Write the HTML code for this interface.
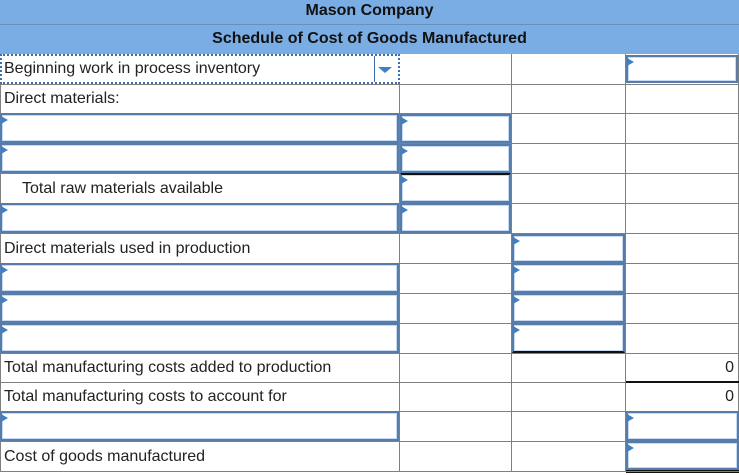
<!DOCTYPE html><html><head><style>
body{margin:0;width:739px;height:475px;background:#fff;font-family:"Liberation Sans",Arial,sans-serif;font-size:16px;color:#222;position:relative;overflow:hidden}
.a{position:absolute;box-sizing:border-box}
.h{background:#7aade3;left:0;width:739px;text-align:center;font-weight:bold;color:#111;font-size:16px}
.hl{height:1px;background:#6a8fb8;left:0;width:739px}
.vl{width:1px;background:#808080}
.hz{height:1px;background:#808080}
.in{border:2px solid #587ca8;box-shadow:inset 0 0 0 1px #c5daf2;background:#fff}
.in:before{content:"";position:absolute;left:-1px;top:1px;border-left:7px solid #3f7fc8;border-top:4px solid transparent;border-bottom:4px solid transparent}
.t{left:4px;line-height:1}
.z{right:5px;text-align:right}
</style></head><body>
<div class="a h" style="top:0;height:24px;line-height:22px">Mason Company</div>
<div class="a hl" style="top:24px"></div>
<div class="a h" style="top:25px;height:29px;line-height:28px">Schedule of Cost of Goods Manufactured</div>

<div class="a vl" style="left:399px;top:54px;height:418px"></div>
<div class="a vl" style="left:511px;top:54px;height:418px"></div>
<div class="a vl" style="left:625px;top:54px;height:418px"></div>
<div class="a vl" style="left:738px;top:54px;height:418px"></div>
<div class="a vl" style="left:0;top:54px;height:418px"></div>
<div class="a hz" style="left:0;width:739px;top:84px"></div>
<div class="a hz" style="left:0;width:739px;top:113px"></div>
<div class="a hz" style="left:0;width:739px;top:143px"></div>
<div class="a hz" style="left:0;width:739px;top:173px"></div>
<div class="a hz" style="left:0;width:739px;top:203px"></div>
<div class="a hz" style="left:0;width:739px;top:233px"></div>
<div class="a hz" style="left:0;width:739px;top:263px"></div>
<div class="a hz" style="left:0;width:739px;top:293px"></div>
<div class="a hz" style="left:0;width:739px;top:323px"></div>
<div class="a hz" style="left:0;width:739px;top:353px"></div>
<div class="a hz" style="left:0;width:739px;top:382px"></div>
<div class="a hz" style="left:0;width:739px;top:411px"></div>
<div class="a hz" style="left:0;width:739px;top:441px"></div>
<div class="a hz" style="left:0;width:739px;top:471px"></div>

<div class="a" style="left:0;top:54px;width:400px;height:30px;border:2px dotted #3d6fb0;background:#fff"></div>
<div class="a" style="left:374px;top:56px;width:1px;height:26px;background:#3d6fb0"></div>
<div class="a" style="left:378px;top:67px;border-left:7px solid transparent;border-right:7px solid transparent;border-top:6px solid #3f7fc8;width:0;height:0"></div>
<div class="a t" style="top:61px">Beginning work in process inventory</div>
<div class="a in" style="left:626px;top:55px;width:112px;height:28px"></div>

<div class="a t" style="top:91px">Direct materials:</div>

<div class="a in" style="left:0;top:113px;width:399px;height:30px"></div>
<div class="a in" style="left:400px;top:114px;width:111px;height:29px"></div>
<div class="a in" style="left:0;top:143px;width:399px;height:30px"></div>
<div class="a in" style="left:400px;top:144px;width:111px;height:29px"></div>

<div class="a" style="left:22px;top:181px;line-height:1">Total raw materials available</div>
<div class="a in" style="left:400px;top:173px;width:111px;height:30px;border-top-color:#111"></div>

<div class="a in" style="left:0;top:203px;width:399px;height:30px"></div>
<div class="a in" style="left:400px;top:203px;width:111px;height:30px"></div>

<div class="a t" style="top:241px">Direct materials used in production</div>
<div class="a in" style="left:512px;top:234px;width:113px;height:29px"></div>

<div class="a in" style="left:0;top:263px;width:399px;height:30px"></div>
<div class="a in" style="left:512px;top:263px;width:113px;height:30px"></div>
<div class="a in" style="left:0;top:293px;width:399px;height:30px"></div>
<div class="a in" style="left:512px;top:293px;width:113px;height:30px"></div>
<div class="a in" style="left:0;top:323px;width:399px;height:30px"></div>
<div class="a in" style="left:512px;top:323px;width:113px;height:30px;border-bottom-color:#111"></div>

<div class="a t" style="top:360px">Total manufacturing costs added to production</div>
<div class="a z" style="top:360px;line-height:1">0</div>
<div class="a" style="left:626px;top:381px;width:113px;height:2px;background:#111"></div>
<div class="a t" style="top:389px">Total manufacturing costs to account for</div>
<div class="a z" style="top:389px;line-height:1">0</div>

<div class="a in" style="left:0;top:411px;width:399px;height:30px"></div>
<div class="a in" style="left:626px;top:411px;width:113px;height:30px"></div>

<div class="a t" style="top:449px">Cost of goods manufactured</div>
<div class="a in" style="left:626px;top:441px;width:113px;height:29px"></div>
<div class="a" style="left:626px;top:470px;width:113px;height:1px;background:#111"></div>
<div class="a" style="left:626px;top:472px;width:113px;height:1px;background:#111"></div>
</body></html>
